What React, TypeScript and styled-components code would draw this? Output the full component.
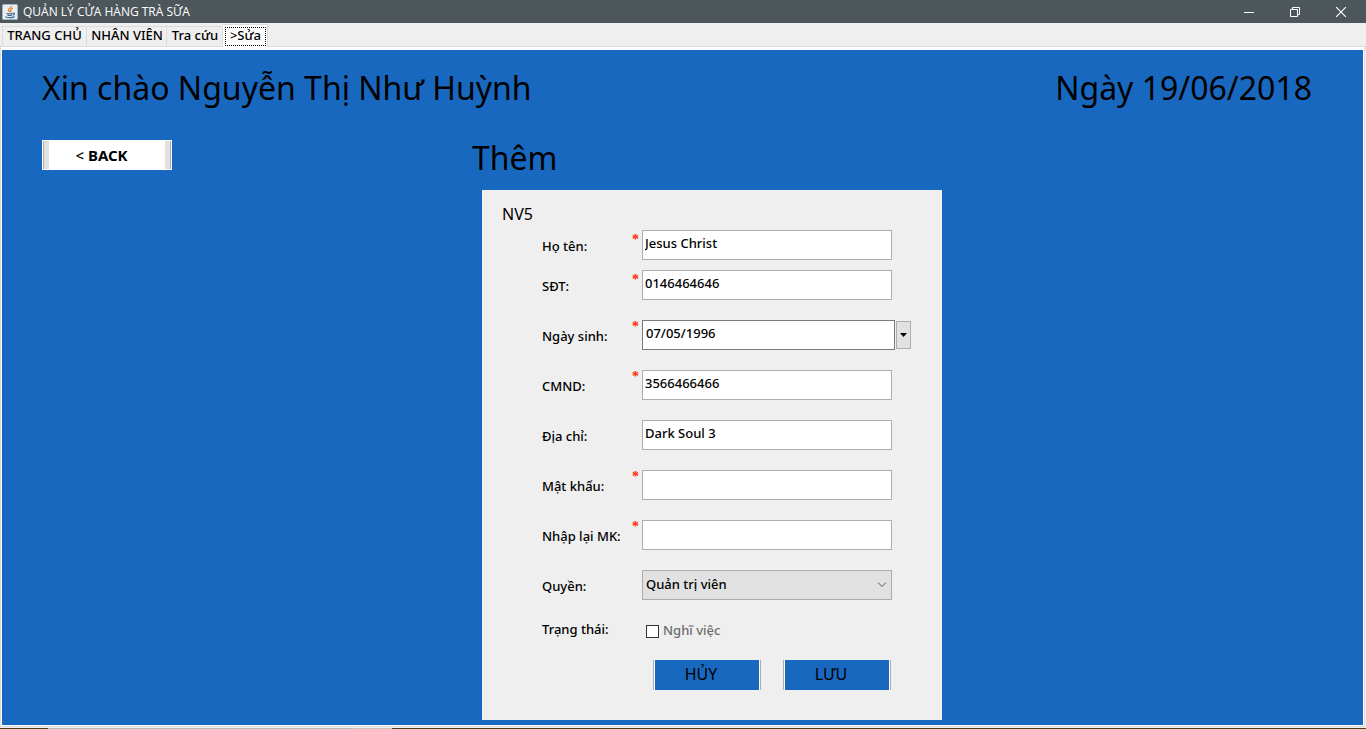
import React from "react";
import styled, { createGlobalStyle } from "styled-components";

const blue = "#1968bf";
const face = "#efefef";
const line = "#adadad";

const Global = createGlobalStyle`
  *, *::before, *::after { box-sizing: border-box; }
  body { margin: 0; background: ${face}; }
  body, button, input, select {
    font-family: "Noto Sans", "Open Sans", sans-serif;
    font-size: 13px;
    color: #000;
  }
`;

const Window = styled.div`
  display: flex;
  flex-direction: column;
  min-height: 100vh;
`;

const TitleBar = styled.header`
  display: flex;
  align-items: center;
  height: 23px;
  padding: 0 2px;
  background: #4c565b;
  color: #fff;
`;

const AppName = styled.span`
  flex: 1;
  padding-left: 5px;
  font-family: "Open Sans", sans-serif;
  font-size: 12px;
  line-height: 20px;
`;

const WindowButton = styled.button`
  display: flex;
  align-items: center;
  justify-content: center;
  width: 46px;
  height: 20px;
  padding: 0;
  border: 0;
  background: none;
`;

const Tabs = styled.nav`
  display: flex;
  align-items: flex-end;
  height: 24px;
  padding-left: 2px;
  border-bottom: 1px solid #dcdcdc;
`;

const Tab = styled.button<{ $width: number }>`
  width: ${(p) => p.$width}px;
  height: 20px;
  padding: 0 0 2px 1px;
  border: 1px solid #dcdcdc;
  border-width: 1px 1px 0 0;
  background: ${face};
  font-weight: 500;
  line-height: 17px;
  white-space: nowrap;
  &:first-child { border-left-width: 1px; padding-left: 0; }
`;

const ActiveTab = styled(Tab)`
  height: 23px;
  margin-bottom: -1px;
  padding: 2px 1px 1px 2px;
  border-width: 1px 1px 0 0;
  background: #fff;
  span {
    display: block;
    height: 19px;
    border: 1px dotted #000;
    line-height: 14px;
  }
`;

const Frame = styled.div`
  flex: 1;
  display: flex;
  margin-right: 1px;
  padding: 3px 1px 1px 1px;
  border: 1px solid #dcdcdc;
  border-width: 0 1px 1px 1px;
  background: #fff;
`;

const Page = styled.main`
  flex: 1;
  padding: 15px 51px 5px 40px;
  background: ${blue};
`;

const Greeting = styled.div`
  display: flex;
  justify-content: space-between;
  font-size: 32px;
  line-height: 46px;
`;

const Heading = styled.h1`
  margin: 0 0 4px;
  font-size: 32px;
  font-weight: 400;
  line-height: 46px;
`;

const Toolbar = styled.div`
  display: flex;
  align-items: center;
  gap: 300px;
  height: 50px;
  margin-top: 24px;
`;

const BackButton = styled.button`
  width: 130px;
  height: 30px;
  margin-bottom: 10px;
  padding: 0 11px 0 0;
  border: 1px solid #fff;
  background: linear-gradient(90deg, ${line} 1px, #e1e1e1 1px 6px, #fff 6px 122px, #e1e1e1 122px 127px, ${line} 127px);
  font-size: 15px;
  font-weight: 700;
  line-height: 28px;
  span { font-weight: 500; }
`;

const Card = styled.form`
  display: flex;
  flex-direction: column;
  width: 460px;
  margin: 5px 0 0 440px;
  padding: 10px 20px 30px;
  background: ${face};
`;

const Code = styled.h2`
  margin: 0;
  padding-bottom: 2px;
  font-size: 16px;
  font-weight: 400;
  line-height: 28px;
`;

const Row = styled.div<{ $gap?: number }>`
  display: grid;
  grid-template-columns: 90px 10px 1fr;
  align-items: center;
  height: 30px;
  margin: ${(p) => p.$gap ?? 20}px 0 0 40px;
`;

const Label = styled.label`
  padding-top: 2px;
  font-weight: 500;
  white-space: nowrap;
`;

const StateLabel = styled(Label)`
  padding: 0 0 2px;
`;

const Star = styled.span<{ $high?: boolean }>`
  align-self: start;
  padding-top: ${(p) => (p.$high ? 0 : 3)}px;
  color: #ff2a00;
  font-family: "Liberation Serif", serif;
  font-size: 14px;
  font-weight: 700;
  line-height: 14px;
`;

const Input = styled.input<{ $date?: boolean }>`
  width: ${(p) => (p.$date ? 253 : 250)}px;
  height: 30px;
  padding: 0 3px 4px ${(p) => (p.$date ? 3 : 2)}px;
  border: 1px solid ${(p) => (p.$date ? "#7a7a7a" : "#abadb3")};
  border-radius: 0;
  background: #fff;
  font-weight: 500;
  outline: none;
`;

const DateBox = styled.div`
  display: flex;
  align-items: center;
  gap: 1px;
`;

const DropButton = styled.button`
  display: flex;
  align-items: center;
  justify-content: center;
  width: 15px;
  height: 28px;
  padding: 0;
  border: 1px solid ${line};
  background: #e1e1e1;
`;

const SelectBox = styled.div`
  display: grid;
  width: 250px;
  align-items: center;
  & > * { grid-area: 1 / 1; }
  svg { justify-self: end; margin-right: 5px; pointer-events: none; }
`;

const Select = styled.select`
  appearance: none;
  height: 30px;
  padding: 0 20px 2px 3px;
  border: 1px solid ${line};
  border-radius: 0;
  background: #e1e1e1;
  font-weight: 500;
`;

const CheckLabel = styled.label`
  display: flex;
  align-items: center;
  gap: 4px;
  padding-left: 4px;
  color: #6d6d6d;
  font-weight: 500;
`;

const Check = styled.input`
  appearance: none;
  width: 13px;
  height: 13px;
  margin: 2px 0 0;
  border: 1px solid #333;
  background: #fff;
`;

const Actions = styled.div`
  display: flex;
  justify-content: flex-end;
  gap: 22px;
  margin: 15px 31px 0 0;
`;

const ActionButton = styled.button`
  width: 108px;
  height: 30px;
  padding: 0 12px 2px 0;
  border: 0;
  background: linear-gradient(90deg, ${line} 1px, #fff 1px 2px, ${blue} 2px 106px, #fff 106px 107px, ${line} 107px);
  font-size: 16px;
`;

const Edge = styled.footer`
  height: 1px;
  margin-top: 1px;
  background: linear-gradient(90deg, #4f3d14 48px, #b9b9b9 48px 352px, #c9c7b4 352px 392px, #4f3d14 392px);
`;

const JavaIcon = () => (
  <svg width="16" height="16" viewBox="0 0 16 16" aria-hidden="true">
    <rect x="0.500" y="0.500" width="15" height="15" rx="1" fill="#e9eef2" stroke="#9fb4c4" />
    <path d="M9.200 2C9.600 4 5.800 4.600 6.400 6.300c.2.700 1 1.200 1.300 2M10.800 4.200C9 4.900 8 5.700 8.900 6.800c.3.500.2 1-.3 1.500" fill="none" stroke="#e8802c" strokeWidth="1.300" />
    <path d="M4.500 9.200c1.500.7 4.700.7 6.300 0M5.200 11c1.500.6 3.500.6 5 0M3.300 12.800c2.500 1 6.700 1 9.200-.2M11 9.200c2-.6 2 1.500-.2 2" fill="none" stroke="#3f6f95" strokeWidth="1.200" />
  </svg>
);

type FieldProps = { id: string; label: string; value?: string; star?: "low" | "high"; gap?: number; type?: string };

const Field = ({ id, label, value = "", star, gap, type = "text" }: FieldProps) => (
  <Row $gap={gap}>
    <Label htmlFor={id}>{label}</Label>
    <Star $high={star === "high"}>{star ? "*" : ""}</Star>
    <Input id={id} type={type} defaultValue={value} />
  </Row>
);

export default function App() {
  return (
    <Window>
      <Global />
      <TitleBar>
        <JavaIcon />
        <AppName>QUẢN LÝ CỬA HÀNG TRÀ SỮA</AppName>
        <WindowButton aria-label="Minimize">
          <svg width="10" height="10"><path d="M0 5.500h10" stroke="#fff" /></svg>
        </WindowButton>
        <WindowButton aria-label="Restore">
          <svg width="10" height="10"><path d="M.5 2.500h7v7h-7zM2.500 2.500v-2h7v7h-2" fill="none" stroke="#fff" /></svg>
        </WindowButton>
        <WindowButton aria-label="Close">
          <svg width="10" height="10"><path d="M0 0l10 10M10 0L0 10" stroke="#fff" strokeWidth="1.200" /></svg>
        </WindowButton>
      </TitleBar>
      <Tabs>
        <Tab $width={85}>TRANG CHỦ</Tab>
        <Tab $width={80}>NHÂN VIÊN</Tab>
        <Tab $width={56}>Tra cứu</Tab>
        <ActiveTab $width={45}><span>&gt;Sửa</span></ActiveTab>
      </Tabs>
      <Frame>
        <Page>
          <Greeting>
            <span>Xin chào Nguyễn Thị Như Huỳnh</span>
            <span>Ngày 19/06/2018</span>
          </Greeting>
          <Toolbar>
            <BackButton><span>&lt;</span> BACK</BackButton>
            <Heading>Thêm</Heading>
          </Toolbar>
          <Card onSubmit={(e) => e.preventDefault()}>
            <Code>NV5</Code>
            <Field id="name" label="Họ tên:" value="Jesus Christ" star="low" gap={0} />
            <Field id="phone" label="SĐT:" value="0146464646" star="low" gap={10} />
            <Row>
              <Label htmlFor="birth">Ngày sinh:</Label>
              <Star $high>*</Star>
              <DateBox>
                <Input id="birth" $date defaultValue="07/05/1996" />
                <DropButton type="button" aria-label="Chọn ngày">
                  <svg width="7" height="4"><path d="M0 0h7L3.500 4z" /></svg>
                </DropButton>
              </DateBox>
            </Row>
            <Field id="idcard" label="CMND:" value="3566466466" star="high" />
            <Field id="address" label="Địa chỉ:" value="Dark Soul 3" />
            <Field id="password" label="Mật khẩu:" star="high" type="password" />
            <Field id="repeat" label="Nhập lại MK:" star="high" type="password" />
            <Row>
              <Label htmlFor="role">Quyền:</Label>
              <span />
              <SelectBox>
                <Select id="role"><option>Quản trị viên</option></Select>
                <svg width="10" height="6"><path d="M1 .5l4 4 4-4" fill="none" stroke="#555" /></svg>
              </SelectBox>
            </Row>
            <Row $gap={15}>
              <StateLabel htmlFor="inactive">Trạng thái:</StateLabel>
              <span />
              <CheckLabel><Check id="inactive" type="checkbox" />Nghĩ việc</CheckLabel>
            </Row>
            <Actions>
              <ActionButton type="button">HỦY</ActionButton>
              <ActionButton type="submit">LƯU</ActionButton>
            </Actions>
          </Card>
        </Page>
      </Frame>
      <Edge />
    </Window>
  );
}
